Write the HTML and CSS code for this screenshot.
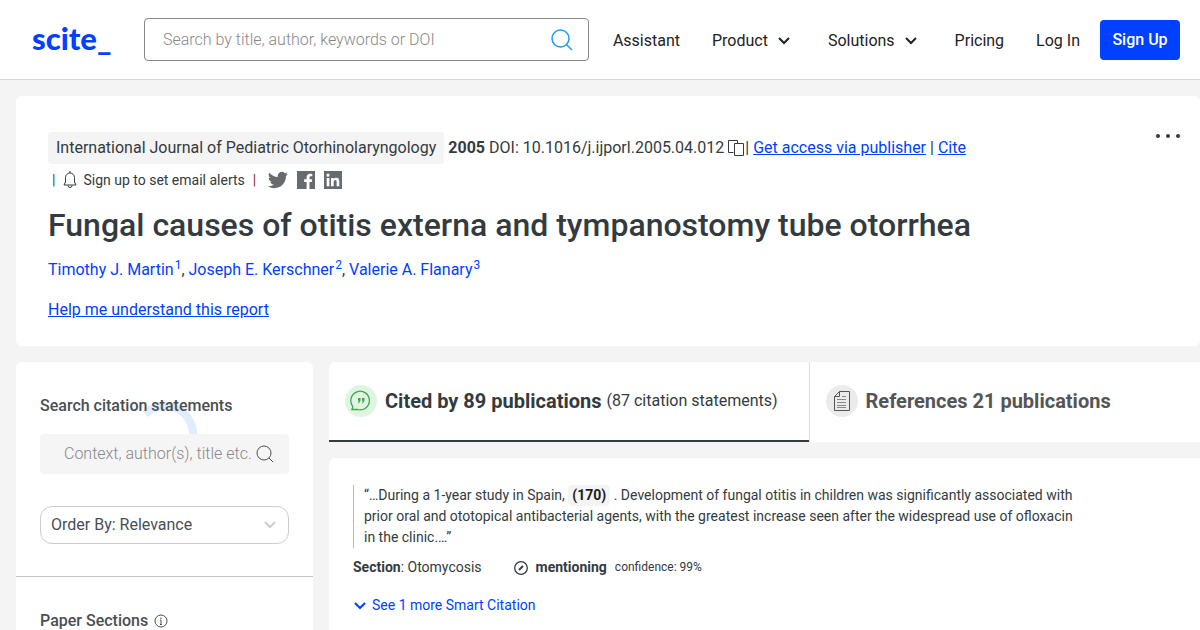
FILE: index.html
```html
<!DOCTYPE html>
<html lang="en">
<head>
    <meta charset="utf-8">
    <meta name="viewport" content="width=device-width, initial-scale=1">
    <title>Fungal causes of otitis externa and tympanostomy tube otorrhea - scite</title>
    <link rel="stylesheet" href="styles.css">
</head>
<body>
    <header class="site-header">
        <a class="logo" href="#">scite_</a>
        <form class="search">
            <input type="text" aria-label="Search papers" placeholder="Search by title, author, keywords or DOI">
            <button type="button" aria-label="Search">
                <svg width="22" height="22" viewBox="0 0 22 22"><circle cx="9.500" cy="9.500" r="8.500"/><path d="M15.500 15.500L21 21"/></svg>
            </button>
        </form>
        <nav class="nav">
            <a href="#">Assistant</a>
            <button type="button">Product <svg class="chevron" width="12" height="8" viewBox="0 0 12 8"><path d="M1 1l5 5 5-5"/></svg></button>
            <button type="button">Solutions <svg class="chevron" width="12" height="8" viewBox="0 0 12 8"><path d="M1 1l5 5 5-5"/></svg></button>
            <a href="#">Pricing</a>
            <a href="#">Log In</a>
        </nav>
        <a class="sign-up" href="#">Sign Up</a>
    </header>

    <section class="paper">
        <div class="paper-main">
            <div class="meta">
                <span class="journal">International Journal of Pediatric Otorhinolaryngology</span>
                <strong>2005</strong>
                <span class="doi">DOI: 10.1016/j.ijporl.2005.04.012</span>
                <span class="copy-group">
                    <button type="button" aria-label="Copy DOI">
                        <svg width="17" height="18" viewBox="0 0 17 18"><path d="M5.500 13.500h-5v-12h9v3"/><path d="M6.500 4.500h9v12h-9z"/></svg>
                    </button>
                    <span>|</span>
                </span>
                <a href="#">Get access via publisher</a>
                <span>|</span>
                <a href="#">Cite</a>
            </div>
            <div class="alerts">
                <span class="bar-blue">|</span>
                <button class="alert-btn" type="button">
                    <svg width="14" height="18" viewBox="0 0 14 18"><path d="M7 0v2M2.500 11V6.500a4.500 4.500 0 0 1 9 0V11l1.500 3H1z"/><path d="M5 14.500a2 2 0 0 0 4 0"/></svg>
                    Sign up to set email alerts
                </button>
                <span class="bar-red">|</span>
                <a href="#" aria-label="Share on Twitter">
                    <svg width="20" height="18" viewBox="0 2 24 20"><path d="M23.950 4.570a10 10 0 0 1-2.820.77 4.960 4.960 0 0 0 2.160-2.720 9.900 9.900 0 0 1-3.130 1.190A4.920 4.920 0 0 0 11.780 8.300 13.900 13.900 0 0 1 1.640 3.160a4.900 4.900 0 0 0 1.520 6.570 4.900 4.900 0 0 1-2.230-.61v.060a4.920 4.920 0 0 0 3.950 4.830 5 5 0 0 1-2.210.080 4.930 4.930 0 0 0 4.600 3.420A9.900 9.900 0 0 1 0 19.540a14 14 0 0 0 7.550 2.210c9.050 0 14-7.500 14-13.980v-.64a9.900 9.900 0 0 0 2.400-2.560z"/></svg>
                </a>
                <a href="#" aria-label="Share on Facebook">
                    <svg width="18" height="18" viewBox="0 0 18 18"><path d="M0 0h18v18h-5.500v-7h2.300l.4-2.700h-2.700V6.600c0-.9.400-1.300 1.400-1.300h1.400V2.900A12 12 0 0 0 13 2.800c-2.100 0-3.400 1.300-3.400 3.500v2H7.200V11h2.400v7H0z"/></svg>
                </a>
                <a href="#" aria-label="Share on LinkedIn">
                    <svg width="18" height="18" viewBox="0 0 18 18"><path fill-rule="evenodd" d="M0 0h18v18H0zM2.700 6.900v8.400h2.700V6.900zM4 2.600a1.600 1.600 0 1 0 0 3.200 1.600 1.600 0 0 0 0-3.200zM7 6.900v8.400h2.700v-4.200c0-1.200.4-2 1.500-2s1.400.8 1.400 2v4.200h2.700v-4.700c0-2.400-.8-3.900-3-3.900-1.300 0-2.200.6-2.600 1.300V6.900z"/></svg>
                </a>
            </div>
            <h1>Fungal causes of otitis externa and tympanostomy tube otorrhea</h1>
            <div class="authors"><a href="#">Timothy J. Martin<sup>1</sup></a>, <a href="#">Joseph E. Kerschner<sup>2</sup></a>, <a href="#">Valerie A. Flanary<sup>3</sup></a></div>
            <a class="help" href="#">Help me understand this report</a>
        </div>
        <button class="more" type="button" aria-label="More actions">
            <svg width="24" height="4" viewBox="0 0 24 4"><circle cx="2" cy="2" r="2"/><circle cx="12" cy="2" r="2"/><circle cx="22" cy="2" r="2"/></svg>
        </button>
    </section>

    <div class="columns">
        <aside class="sidebar">
            <svg class="spinner" width="64" height="64" viewBox="0 0 64 64"><path d="M12.200 12.200A28 28 0 0 1 60 32"/></svg>
            <div class="filters">
                <label class="side-title" for="statement-search">Search citation statements</label>
                <div class="side-search">
                    <input id="statement-search" type="text" placeholder="Context, author(s), title etc.">
                    <svg width="18" height="18" viewBox="0 0 18 18"><circle cx="8" cy="8" r="7"/><path d="M13 13l4 4"/></svg>
                </div>
                <div class="order">
                    <select aria-label="Order by">
                        <option>Order By: Relevance</option>
                    </select>
                    <svg class="chevron" width="12" height="8" viewBox="0 0 12 8"><path d="M1 1l5 5 5-5"/></svg>
                </div>
            </div>
            <div class="sections">
                <span class="side-title">Paper Sections</span>
                <svg width="14" height="14" viewBox="0 0 14 14"><circle cx="7" cy="7" r="6"/><path d="M7 6v4.500M7 3.500V5M6 6h1M6 10.500h2"/></svg>
            </div>
        </aside>

        <main class="content">
            <div class="tabs">
                <button class="tab active" type="button">
                    <svg class="tab-icon" width="32" height="32" viewBox="0 0 32 32">
                        <circle cx="16" cy="16" r="16" fill="#dff5e1"/>
                        <path d="M6.800 24.500c.8-1 1.200-2.200.9-3.300A9.300 9.300 0 1 1 12.500 24.500z" fill="none" stroke="#3fa650" stroke-width="1.300" stroke-linejoin="round"/>
                        <path d="M13 13h2.500v2.500L14 18.300h-1l.8-2.500H13zM17 13h2.500v2.500L18 18.300h-1l.8-2.500H17z" fill="#3fa650"/>
                    </svg>
                    <span class="tab-title">Cited by 89 publications</span>
                    <span class="tab-note">(87 citation statements)</span>
                </button>
                <button class="tab" type="button">
                    <svg class="tab-icon" width="32" height="32" viewBox="0 0 32 32">
                        <circle cx="16" cy="16" r="16" fill="#ebebeb"/>
                        <path d="M13.500 6.500h10v19h-15v-14zM13.500 6.500v5h-5" fill="none" stroke="#555"/>
                        <path d="M16 11.500h4M11 14.500h9M11 17.500h9M11 20.500h9M11 22.500h9" stroke="#888"/>
                    </svg>
                    <span class="tab-title">References 21 publications</span>
                </button>
            </div>

            <article class="citation">
                <blockquote>“…During a 1-year study in Spain, <b class="ref">(170)</b> . Development of fungal otitis in children was significantly associated with prior oral and ototopical antibacterial agents, with the greatest increase seen after the widespread use of ofloxacin in the clinic.…”</blockquote>
                <div class="details">
                    <span class="section-name"><b>Section</b>: Otomycosis</span>
                    <svg width="14" height="14" viewBox="0 0 14 14"><circle cx="7" cy="7" r="6.300"/><path class="slash" d="M5 9l4-4"/></svg>
                    <b>mentioning</b>
                    <span class="confidence">confidence: 99%</span>
                </div>
                <button class="see-more" type="button">
                    <svg class="chevron" width="12" height="8" viewBox="0 0 12 8"><path d="M1 1l5 5 5-5"/></svg>
                    See 1 more Smart Citation
                </button>
            </article>
        </main>
    </div>
</body>
</html>
```
FILE: styles.css
```css
* {
    box-sizing: border-box;
}
body {
    margin: 0;
    min-height: 100vh;
    display: flex;
    flex-direction: column;
    background-color: #f4f4f4;
    color: #333b40;
    font-family: Roboto, "Liberation Sans", sans-serif;
    font-size: 16px;
    line-height: 24px;
}
a {
    color: #0041ff;
}
button {
    background: none;
    border: none;
    padding: 0;
    color: inherit;
    font: inherit;
    cursor: pointer;
}
input, select {
    font: inherit;
    color: inherit;
}
svg {
    display: block;
    flex-shrink: 0;
}
.chevron {
    fill: none;
    stroke: currentColor;
    stroke-width: 2;
}

/* header */
.site-header {
    display: flex;
    align-items: center;
    height: 80px;
    padding: 0 20px 0 32px;
    background-color: #fff;
    border-bottom: 1px solid #d8d8d8;
}
.logo {
    width: 80px;
    margin-right: 32px;
    padding-bottom: 4px;
    font-family: Lato, sans-serif;
    font-size: 31px;
    font-weight: 900;
    line-height: 32px;
    text-decoration: none;
}
.search {
    display: flex;
    align-items: center;
    flex: 1;
    height: 43px;
    padding: 0 15px 0 18px;
    border: 1px solid #888;
    border-radius: 4px;
}
.search input {
    flex: 1;
    min-width: 0;
    padding: 0;
    border: none;
    outline: none;
    background: none;
}
input::placeholder {
    color: #888;
    font-weight: 300;
    opacity: 1;
}
.search svg {
    fill: none;
    stroke: #1b9cf5;
    stroke-width: 1.500;
}
.nav {
    display: flex;
    gap: 32px;
    margin: 0 20px 0 24px;
    padding-top: 2px;
}
.nav a, .nav button {
    display: flex;
    align-items: center;
    gap: 10px;
    color: #222;
    text-decoration: none;
    white-space: nowrap;
}
.nav button {
    padding-right: 6px;
}
.sign-up {
    width: 80px;
    border-radius: 4px;
    background-color: #0041ff;
    color: #fff;
    font-weight: 500;
    line-height: 40px;
    text-align: center;
    text-decoration: none;
}

/* paper summary */
.paper {
    display: flex;
    justify-content: space-between;
    align-items: flex-start;
    margin: 16px 0 16px 16px;
    padding: 36px 20px 24px 32px;
    border-radius: 6px;
    background-color: #fff;
}
.meta {
    display: flex;
    align-items: center;
    gap: 4px;
}
.journal {
    padding: 4px 8px;
    border-radius: 4px;
    background-color: #f4f4f4;
}
.copy-group {
    display: flex;
    align-items: center;
}
.copy-group svg, .alert-btn svg {
    fill: none;
    stroke: currentColor;
}
.alerts {
    display: flex;
    align-items: center;
    height: 32px;
    padding-left: 4px;
    font-size: 14px;
}
.bar-blue {
    color: #0b4f8a;
}
.bar-red {
    margin: 0 12px 0 8px;
    color: #7a2b2b;
}
.alert-btn {
    display: flex;
    align-items: center;
    gap: 6px;
    margin-left: 8px;
}
.alerts a {
    margin-right: 9px;
}
.alerts a svg {
    fill: #666b6f;
}
h1 {
    margin: 8px 0 12px;
    font-size: 32px;
    font-weight: 500;
    line-height: 42px;
}
.authors {
    margin-bottom: 16px;
}
.authors a {
    text-decoration: none;
}
sup {
    margin-left: 1px;
    font-size: 12px;
    line-height: 0;
}
.more {
    margin-top: 2px;
}
.more svg {
    fill: #333b40;
}

/* citations */
.columns {
    display: flex;
    flex: 1;
    gap: 16px;
    padding-left: 16px;
}
.sidebar {
    position: relative;
    width: 297px;
    flex-shrink: 0;
    border-radius: 6px 6px 0 0;
    background-color: #fff;
    color: #484f53;
}
.spinner {
    position: absolute;
    top: 40px;
    left: 50%;
    margin-left: -32px;
    fill: none;
    stroke: #e0edff;
    stroke-width: 8;
}
.filters {
    position: relative;
    padding: 32px 24px;
    border-bottom: 1px solid #c4c4c4;
}
.side-title {
    font-weight: 500;
}
.side-search {
    display: flex;
    align-items: center;
    height: 40px;
    margin: 16px 0 32px;
    padding: 0 15px 0 24px;
    border-radius: 4px;
    background-color: #f5f5f5;
}
.side-search input {
    flex: 1;
    min-width: 0;
    padding: 0;
    border: none;
    outline: none;
    background: none;
}
.side-search svg, .sections svg {
    fill: none;
    stroke: currentColor;
}
.order {
    display: flex;
    align-items: center;
    position: relative;
}
.order select {
    width: 100%;
    height: 38px;
    padding: 0 10px;
    appearance: none;
    border: 1px solid #ccc;
    border-radius: 12px;
    background-color: #fff;
}
.order .chevron {
    position: absolute;
    right: 13px;
    color: #ccc;
    pointer-events: none;
}
.sections {
    display: flex;
    align-items: center;
    gap: 6px;
    padding: 35px 24px 0;
    line-height: 18px;
}
.content {
    display: flex;
    flex-direction: column;
    flex: 1;
    min-width: 0;
}
.tabs {
    display: flex;
    margin-bottom: 16px;
    border-radius: 6px 0 0 0;
    background-color: #fff;
}
.tab {
    display: flex;
    align-items: center;
    height: 80px;
    padding: 0 31px 2px 16px;
    color: #555;
    white-space: nowrap;
}
.tab + .tab {
    border-left: 1px solid #ddd;
}
.tab.active {
    color: #333b40;
    box-shadow: inset 0 -2px #333b40;
}
.tab-icon {
    margin-right: 8px;
}
.tab-title {
    margin-right: 5px;
    font-size: 20px;
    font-weight: 700;
}
.citation {
    flex: 1;
    padding: 27px 24px 0;
    border-radius: 6px 0 0 0;
    background-color: #fff;
    font-size: 14px;
    line-height: 21px;
}
blockquote {
    max-width: 724px;
    margin: 0 0 9px;
    padding-left: 10px;
    border-left: 1px solid #bbb;
}
.ref {
    display: inline-block;
    padding: 0 4px;
    border-radius: 4px;
    background-color: #f4f4f4;
    color: #1c1c1c;
}
.details {
    display: flex;
    align-items: center;
    margin-bottom: 17px;
}
.details svg {
    margin: 0 8px 0 32px;
    fill: none;
    stroke: currentColor;
    stroke-width: 1.300;
}
.details .slash {
    stroke-width: 2;
}
.confidence {
    margin-left: 8px;
    font-size: 12px;
}
.see-more {
    display: flex;
    align-items: center;
    gap: 6px;
    padding-left: 1px;
    color: #0041ff;
}
```
